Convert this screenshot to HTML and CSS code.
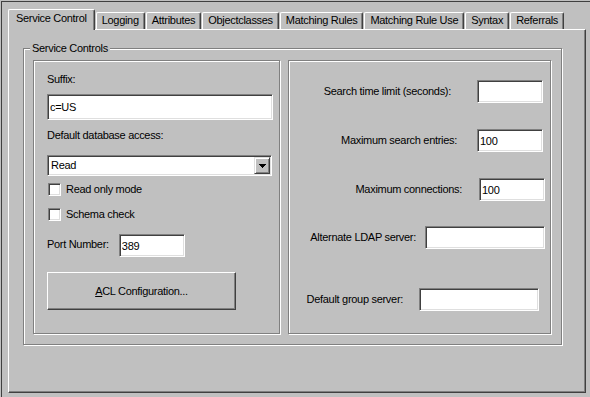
FILE: index.html
```html
<!DOCTYPE html>
<html lang="en">
<head>
    <meta charset="UTF-8">
    <meta name="viewport" content="width=device-width, initial-scale=1.0">
    <title>Service Control</title>
    <link rel="stylesheet" href="styles.css">
</head>
<body>
    <div class="window">
        <div class="tabs">
            <div class="tab active">Service Control</div>
            <div class="tab">Logging</div>
            <div class="tab">Attributes</div>
            <div class="tab">Objectclasses</div>
            <div class="tab">Matching Rules</div>
            <div class="tab">Matching Rule Use</div>
            <div class="tab">Syntax</div>
            <div class="tab">Referrals</div>
        </div>
        <div class="tab-body">
            <div class="group">
                <span class="legend">Service Controls</span>

                <div class="panel left-panel">
                    <div class="label suffix-label">Suffix:</div>
                    <input class="field suffix-field" type="text" value="c=US">
                    <div class="label access-label">Default database access:</div>
                    <div class="select">
                        <span class="select-value">Read</span>
                        <span class="select-button">
                            <svg width="7" height="4" viewBox="0 0 7 4">
                                <rect x="0" y="0" width="7" height="1"/>
                                <rect x="1" y="1" width="5" height="1"/>
                                <rect x="2" y="2" width="3" height="1"/>
                                <rect x="3" y="3" width="1" height="1"/>
                            </svg>
                        </span>
                    </div>
                    <label class="check check-first"><span class="box"></span>Read only mode</label>
                    <label class="check check-second"><span class="box"></span>Schema check</label>
                    <div class="port-row">
                        <span class="label">Port Number:</span>
                        <input class="field port-field" type="text" value="389">
                    </div>
                    <button class="acl-button"><u>A</u>CL Configuration...</button>
                </div>

                <div class="panel right-panel">
                    <div class="row row-time">
                        <span class="label">Search time limit (seconds):</span>
                        <input class="field short" type="text" value="">
                    </div>
                    <div class="row row-entries">
                        <span class="label">Maximum search entries:</span>
                        <input class="field short" type="text" value="100">
                    </div>
                    <div class="row row-connections">
                        <span class="label">Maximum connections:</span>
                        <input class="field short" type="text" value="100">
                    </div>
                    <div class="row row-ldap">
                        <span class="label">Alternate LDAP server:</span>
                        <input class="field long" type="text" value="">
                    </div>
                    <div class="row row-group">
                        <span class="label">Default group server:</span>
                        <input class="field long" type="text" value="">
                    </div>
                </div>
            </div>
        </div>
    </div>
</body>
</html>
```

FILE: styles.css
```css
* {
    box-sizing: border-box;
}

body {
    margin: 0;
    background-color: #c0c0c0;
    font-family: "Liberation Sans", Arial, sans-serif;
    font-size: 11px;
    letter-spacing: -0.3px;
    line-height: 15px;
    color: #000;
}

.window {
    height: 396px;
    margin: 1px 0 0 1px;
    padding: 7px 0 0 6px;
    border-top: 1px solid #404040;
    border-left: 1px solid #404040;
}

.label {
    white-space: nowrap;
}

/* tab strip */
.tabs {
    display: flex;
    align-items: flex-end;
    height: 20px;
}

.tab {
    height: 17px;
    padding: 0 5px;
    margin-right: 1px;
    border-top: 1px solid #fff;
    border-left: 1px solid #fff;
    border-right: 1px solid #404040;
    border-radius: 2px 2px 0 0;
    box-shadow: inset -1px 0 #808080;
    white-space: nowrap;
}

.tab.active {
    position: relative;
    z-index: 1;
    height: 21px;
    margin-bottom: -1px;
    padding: 1px 7px 0 7px;
    background-color: #c0c0c0;
}

.tab-body {
    width: 578px;
    height: 364px;
    padding: 18px 0 0 14px;
    border: 1px solid;
    border-color: #fff #404040 #404040 #fff;
    box-shadow: inset -1px -1px #808080;
}

/* etched boxes */
.group {
    position: relative;
    display: flex;
    gap: 8px;
    width: 539px;
    height: 297px;
    padding: 11px 10px 10px 9px;
    border: 1px solid #808080;
    box-shadow: inset 1px 1px #fff, 1px 1px #fff;
}

.legend {
    position: absolute;
    top: -8px;
    left: 6px;
    padding: 0 2px;
    background-color: #c0c0c0;
}

.panel {
    height: 274px;
    border: 1px solid #808080;
    box-shadow: inset 1px 1px #fff, 1px 1px #fff;
}

.left-panel {
    width: 247px;
    padding: 11px 0 0 13px;
    display: flex;
    flex-direction: column;
    align-items: flex-start;
}

.right-panel {
    width: 263px;
    padding-top: 19px;
    display: flex;
    flex-direction: column;
    gap: 26px;
}

/* sunken fields */
.field {
    height: 23px;
    padding: 0 2px;
    border: 1px solid;
    border-color: #808080 #fff #fff #808080;
    box-shadow: inset 1px 1px #404040, inset -1px -1px #dfdfdf;
    background-color: #fff;
    font: inherit;
    letter-spacing: inherit;
    color: #000;
    outline: none;
}

.suffix-field {
    width: 226px;
    height: 26px;
    margin-top: 7px;
}

.access-label {
    margin-top: 8px;
}

.select {
    display: flex;
    align-items: center;
    width: 225px;
    height: 21px;
    margin-top: 12px;
    padding: 1px;
    border: 1px solid;
    border-color: #808080 #fff #fff #808080;
    box-shadow: inset 1px 1px #404040, inset -1px -1px #dfdfdf;
    background-color: #fff;
}

.select-value {
    flex: 1;
    padding-left: 2px;
}

.select-button {
    display: flex;
    align-items: center;
    justify-content: center;
    width: 16px;
    height: 17px;
    border: 1px solid;
    border-color: #dfdfdf #404040 #404040 #dfdfdf;
    box-shadow: inset 1px 1px #fff, inset -1px -1px #808080;
    background-color: #c0c0c0;
}

.check {
    display: flex;
    align-items: center;
    gap: 5px;
    margin-left: 1px;
}

.check-first {
    margin-top: 6px;
}

.check-second {
    margin-top: 10px;
}

.box {
    width: 13px;
    height: 13px;
    border: 1px solid;
    border-color: #808080 #fff #fff #808080;
    box-shadow: inset 1px 1px #404040, inset -1px -1px #dfdfdf;
    background-color: #fff;
}

.port-row {
    display: flex;
    align-items: center;
    gap: 10px;
    margin-top: 12px;
}

.port-row .label {
    padding-bottom: 3px;
}

.port-field {
    width: 66px;
}

.acl-button {
    width: 189px;
    height: 38px;
    margin-top: 15px;
    border: 1px solid;
    border-color: #fff #404040 #404040 #fff;
    box-shadow: inset -1px -1px #808080;
    background-color: #c0c0c0;
    font: inherit;
    letter-spacing: inherit;
    color: #000;
}

/* right column rows */
.row {
    display: flex;
    justify-content: flex-end;
    align-items: center;
}

.short {
    width: 66px;
}

.long {
    width: 120px;
}

.row-time {
    gap: 26px;
    padding-right: 7px;
}

.row-entries {
    gap: 20px;
    padding-right: 7px;
}

.row-connections {
    gap: 17px;
    padding-right: 5px;
}

.row-ldap {
    gap: 9px;
    padding-right: 5px;
    margin-top: -1px;
}

.row-group {
    gap: 16px;
    padding-right: 11px;
    margin-top: 13px;
}
```
